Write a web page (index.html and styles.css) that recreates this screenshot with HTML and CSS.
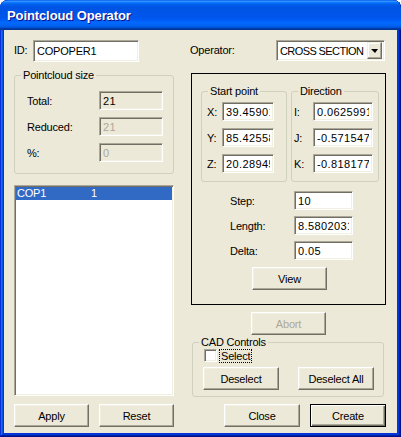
FILE: index.html
```html
<!DOCTYPE html>
<html>
  <head>
    <title>Pointcloud Operator</title>
    <link rel="stylesheet" href="styles.css">
  </head>
  <body>
  <div class="window">
    <div class="title-bar">
      <span class="title-text">Pointcloud Operator</span>
    </div>
    <div class="client">

      <div class="col col-left">
        <div class="line">
          <label class="lbl lbl-id" for="opid">ID:</label>
          <input type="text" class="edit edit-id" id="opid" value="COPOPER1"/>
        </div>

        <div class="group size-group">
          <span class="legend">Pointcloud size</span>
          <div class="row size-row"><span class="lbl">Total:</span><input type="text" class="edit num edit-ro" value="21" readonly/></div>
          <div class="row size-row"><span class="lbl">Reduced:</span><input type="text" class="edit num edit-ro" value="21" disabled/></div>
          <div class="row size-row"><span class="lbl">%:</span><input type="text" class="edit num edit-ro" value="0" disabled/></div>
        </div>

        <div class="listbox">
          <div class="list-item selected"><span class="item-name">COP1</span><span>1</span></div>
        </div>

        <div class="btn-row">
          <button class="btn">Apply</button>
          <button class="btn">Reset</button>
        </div>
      </div>

      <div class="col col-right">
        <div class="line">
          <span class="lbl lbl-op">Operator:</span>
          <div class="combo">
            <span class="combo-text">CROSS SECTION</span>
            <span class="combo-btn"><span class="arrow"></span></span>
          </div>
        </div>

        <div class="op-box">
          <div class="vec-row">
            <div class="group vec-group start-group">
              <span class="legend">Start point</span>
              <div class="row"><span class="lbl">X:</span><input type="text" class="edit num" value="39.459012"/></div>
              <div class="row"><span class="lbl">Y:</span><input type="text" class="edit num" value="85.425581"/></div>
              <div class="row"><span class="lbl">Z:</span><input type="text" class="edit num" value="20.289451"/></div>
            </div>
            <div class="group vec-group dir-group">
              <span class="legend">Direction</span>
              <div class="row"><span class="lbl">I:</span><input type="text" class="edit num" value="0.0625991"/></div>
              <div class="row"><span class="lbl">J:</span><input type="text" class="edit num" value="-0.5715471"/></div>
              <div class="row"><span class="lbl">K:</span><input type="text" class="edit num" value="-0.8181771"/></div>
            </div>
          </div>

          <div class="step-rows">
            <div class="row"><span class="lbl">Step:</span><input type="text" class="edit num" value="10"/></div>
            <div class="row"><span class="lbl">Length:</span><input type="text" class="edit num" value="8.5802031"/></div>
            <div class="row"><span class="lbl">Delta:</span><input type="text" class="edit num" value="0.05"/></div>
          </div>

          <button class="btn btn-view">View</button>
        </div>

        <button class="btn btn-abort" disabled>Abort</button>

        <div class="group cad-group">
          <span class="legend">CAD Controls</span>
          <div class="check-row">
            <span class="checkbox"></span>
            <span class="check-label">Select</span>
          </div>
          <div class="cad-buttons">
            <button class="btn">Deselect</button>
            <button class="btn">Deselect All</button>
          </div>
        </div>

        <div class="btn-row btn-row-right">
          <button class="btn">Close</button>
          <button class="btn btn-default">Create</button>
        </div>
      </div>

    </div>
  </div>
  </body>
</html>
```

FILE: styles.css
```css
html, body {
    margin: 0;
    padding: 0;
}
body {
    font-family: "Liberation Sans", Arial, sans-serif;
    font-size: 11px;
    letter-spacing: -0.2px;
    color: #000;
    background: #fff;
}

/* window frame */
.window {
    width: 401px;
    height: 437px;
    box-sizing: border-box;
    padding: 0 4px 4px;
    background: #0831d9;
    border-radius: 8px 8px 0 0;
    box-shadow: inset -1px -1px #00138c, inset 1px 1px #0831d9,
                inset -2px -2px #001ea0, inset 2px 2px #166aee,
                inset -3px -3px #003bda, inset 3px 3px #0855dd;
    display: flex;
    flex-direction: column;
    overflow: hidden;
}
.title-bar {
    height: 30px;
    flex: none;
    margin: 0 -4px;
    padding-left: 7px;
    display: flex;
    align-items: center;
    border-radius: 8px 8px 0 0;
    background: linear-gradient(180deg, #0058ee 0%, #3593ff 4%, #288eff 6%, #127dff 8%,
                #036ffc 10%, #0262ee 14%, #0057e5 20%, #0054e3 24%, #0055eb 56%,
                #005bf5 66%, #026afe 76%, #0062ef 86%, #0052d6 92%, #0040ab 94%, #003092 100%);
}
.title-text {
    color: #fff;
    font-weight: bold;
    font-size: 13px;
    letter-spacing: -0.1px;
    padding-top: 1px;
    text-shadow: 1px 1px #0f1089;
}
.client {
    flex: 1;
    background: #ece9d8;
    display: flex;
    gap: 16px;
    padding: 10px 0 0 10px;
}

.col {
    display: flex;
    flex-direction: column;
}
.col-left { width: 160px; }
.col-right { width: 196px; }

.line {
    display: flex;
    height: 22px;
}
.line .lbl { line-height: 21px; }
.lbl-id { width: 19px; }
.lbl-op { width: 86px; }

.row {
    display: flex;
    align-items: center;
    height: 19px;
}

/* sunken edit field */
.edit {
    box-sizing: border-box;
    height: 19px;
    margin: 0;
    padding: 0 3px;
    font-family: inherit;
    font-size: 11px;
    letter-spacing: -0.2px;
    color: #000;
    background: #fff;
    border: 1px solid;
    border-color: #aca899 #fff #fff #aca899;
    box-shadow: inset 1px 1px #716f64, inset -1px -1px #f1efe2;
    outline: none;
}
.edit.num {
    letter-spacing: 0.4px;
}
.edit-id {
    width: 106px;
    height: 22px;
}
.edit-ro {
    background: #ece9d8;
}
.edit:disabled {
    color: #aca899;
}

/* group boxes */
.group {
    position: relative;
    box-sizing: border-box;
    border: 1px solid #d0d0bf;
    border-radius: 3px;
}
.legend {
    position: absolute;
    top: -7px;
    left: 6px;
    padding: 0 2px;
    line-height: 13px;
    white-space: nowrap;
    background: #ece9d8;
}

.size-group {
    margin-top: 13px;
    height: 99px;
    padding: 15px 0 0 12px;
    display: flex;
    flex-direction: column;
    gap: 7px;
}
.size-row .lbl { width: 72px; }
.size-row .edit { width: 64px; }

.listbox {
    margin-top: 11px;
    height: 211px;
    box-sizing: border-box;
    background: #fff;
    border: 1px solid;
    border-color: #aca899 #fff #fff #aca899;
    box-shadow: inset 1px 1px #716f64, inset -1px -1px #f1efe2;
    padding: 1px;
}
.list-item {
    display: flex;
    height: 13px;
    line-height: 13px;
    padding-left: 1px;
}
.list-item.selected {
    background: #316ac5;
    color: #fff;
}
.item-name { width: 74px; }

/* buttons */
.btn {
    box-sizing: border-box;
    width: 75px;
    height: 23px;
    margin: 0;
    padding: 0;
    font-family: inherit;
    font-size: 11px;
    letter-spacing: -0.2px;
    color: #000;
    background: #ece9d8;
    border: 1px solid;
    border-color: #fff #716f64 #716f64 #fff;
    box-shadow: inset -1px -1px #aca899, inset 1px 1px #f1efe2;
}
.btn:disabled {
    color: #aca899;
}
.btn-default {
    border-color: #000;
    box-shadow: inset 1px 1px #fff, inset -1px -1px #716f64, inset -2px -2px #aca899;
}
.btn-row {
    display: flex;
    gap: 10px;
    margin-top: 8px;
}
.btn-row-right {
    justify-content: flex-end;
    margin-top: 7px;
}
.btn-row-right .btn { width: 76px; }

/* combo box */
.combo {
    box-sizing: border-box;
    width: 109px;
    height: 21px;
    display: flex;
    align-items: center;
    background: #fff;
    border: 1px solid;
    border-color: #aca899 #fff #fff #aca899;
    box-shadow: inset 1px 1px #716f64, inset -1px -1px #f1efe2;
    padding: 2px;
}
.combo-text {
    flex: 1;
    padding-left: 1px;
    letter-spacing: -0.6px;
    white-space: nowrap;
    overflow: hidden;
}
.combo-btn {
    box-sizing: border-box;
    flex: none;
    width: 15px;
    height: 17px;
    display: flex;
    align-items: center;
    justify-content: center;
    background: #ece9d8;
    border: 1px solid;
    border-color: #f1efe2 #716f64 #716f64 #f1efe2;
    box-shadow: inset -1px -1px #aca899, inset 1px 1px #fff;
}
.arrow {
    width: 0;
    height: 0;
    border-top: 4px solid #000;
    border-left: 4px solid transparent;
    border-right: 3px solid transparent;
}

/* operator box */
.op-box {
    box-sizing: border-box;
    width: 195px;
    height: 232px;
    margin: 11px 0 0 1px;
    padding: 17px 0 0 9px;
    border: 1px solid #000;
    display: flex;
    flex-direction: column;
}
.vec-row {
    display: flex;
    gap: 4px;
}
.vec-group {
    height: 91px;
    padding-top: 10px;
    display: flex;
    flex-direction: column;
    gap: 7px;
}
.start-group {
    width: 86px;
    padding-left: 5px;
}
.start-group .lbl { width: 15px; }
.start-group .edit { width: 52px; }
.dir-group {
    width: 88px;
    padding-left: 2px;
}
.dir-group .lbl { width: 19px; }
.dir-group .edit { width: 60px; }

.step-rows {
    margin-top: 9px;
    padding-left: 29px;
    display: flex;
    flex-direction: column;
    gap: 6px;
}
.step-rows .lbl { width: 64px; }
.step-rows .edit { width: 59px; }

.btn-view {
    margin: 7px 0 0 51px;
}
.btn-abort {
    margin: 7px 0 0 61px;
}

/* CAD controls */
.cad-group {
    width: 192px;
    height: 55px;
    margin: 7px 0 0 2px;
    padding: 6px 0 0 10px;
}
.check-row {
    display: flex;
    height: 14px;
}
.checkbox {
    box-sizing: border-box;
    width: 13px;
    height: 13px;
    margin-left: 1px;
    background: #fff;
    border: 1px solid;
    border-color: #aca899 #fff #fff #aca899;
    box-shadow: inset 1px 1px #716f64, inset -1px -1px #f1efe2;
}
.check-label {
    margin-left: 2px;
    padding: 0 1px;
    line-height: 12px;
    border: 1px dotted #000;
}
.cad-buttons {
    display: flex;
    gap: 19px;
    margin-top: 4px;
}
.cad-buttons .btn { width: 76px; }
```
